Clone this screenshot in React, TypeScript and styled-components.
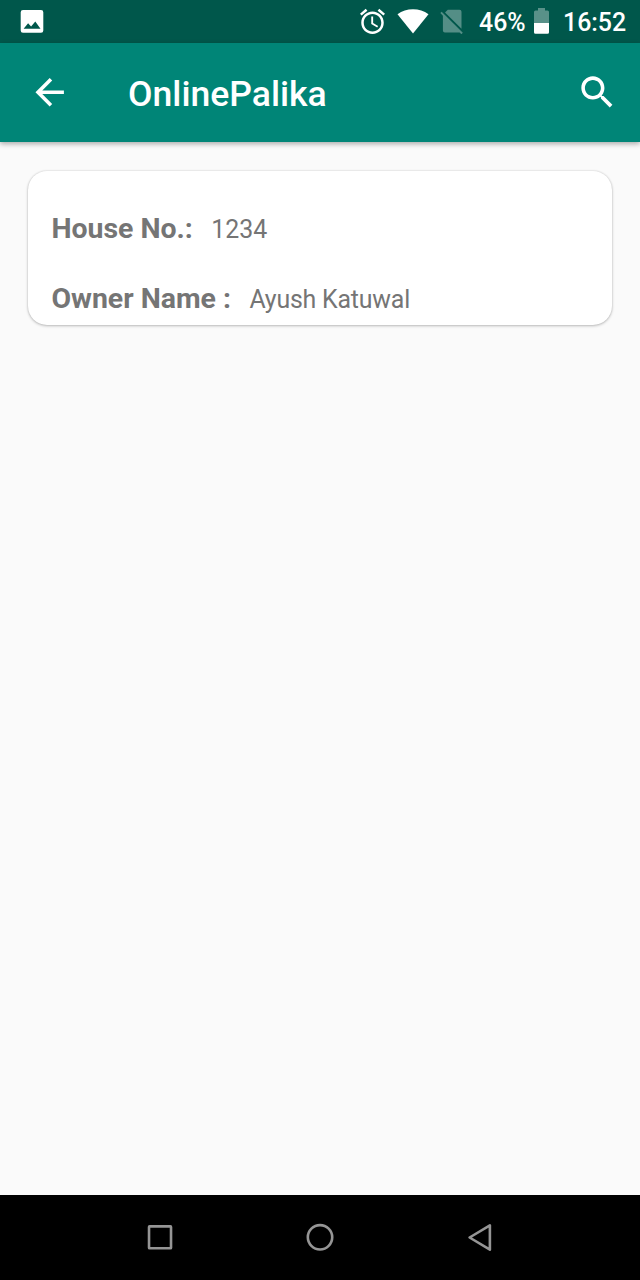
import React from "react";
import styled, { createGlobalStyle } from "styled-components";

const GlobalStyle = createGlobalStyle`
  * { box-sizing: border-box; }
  body { margin: 0; background: #fafafa; font-family: Roboto, "Liberation Sans", sans-serif; }
`;

const Screen = styled.div`
  display: flex;
  flex-direction: column;
  width: 640px;
  height: 1280px;
  overflow: hidden;
  background: #fafafa;
`;

const StatusBar = styled.header`
  flex: none;
  display: flex;
  align-items: center;
  height: 42.67px;
  padding: 0 14px 0 20px;
  background: #00574b;
  color: #fff;
`;

const Icon = styled.svg<{ $w: number; $h: number; $gap?: number }>`
  display: block;
  flex: none;
  width: ${(p) => p.$w}px;
  height: ${(p) => p.$h}px;
  margin-left: ${(p) => p.$gap ?? 0}px;
`;

const StatusGroup = styled.div`
  display: flex;
  align-items: center;
  margin-left: auto;
`;

const StatusText = styled.span<{ $gap: number; $width: number }>`
  width: ${(p) => p.$width}px;
  margin-left: ${(p) => p.$gap}px;
  padding-top: 4px;
  font-size: 24.9px;
  font-weight: 500;
  line-height: 30px;
  white-space: nowrap;
`;

const AppBar = styled.div`
  flex: none;
  display: flex;
  align-items: center;
  height: 99.55px;
  padding: 0 21px 0 28.4px;
  background: #008577;
  color: #fff;
  box-shadow: 0 2px 5px rgba(0, 0, 0, 0.32);
`;

const IconButton = styled.button`
  flex: none;
  padding: 0;
  border: 0;
  background: none;
  color: inherit;
`;

const Title = styled.h1`
  flex: 1;
  margin: 4px 0 0 57px;
  font-size: 35.56px;
  font-weight: 500;
  line-height: 42px;
`;

const Content = styled.main`
  flex: 1;
  padding: 28.5px 28.4px;
`;

const Card = styled.section`
  display: flex;
  flex-direction: column;
  gap: 36px;
  height: 154.5px;
  padding: 41px 23px 0;
  border-radius: 19px;
  background: #fff;
  box-shadow: 0 1px 3px rgba(0, 0, 0, 0.24), 0 0 2px rgba(0, 0, 0, 0.14);
`;

const Field = styled.div`
  display: flex;
  align-items: baseline;
  height: 34px;
  line-height: 34px;
  color: #757575;
  white-space: nowrap;
`;

const Label = styled.span`
  font-size: 28.44px;
  font-weight: 700;
`;

const Value = styled.span<{ $tracking: number }>`
  margin-left: 18.4px;
  font-size: 24.9px;
  letter-spacing: ${(p) => p.$tracking}px;
`;

const NavBar = styled.nav`
  flex: none;
  display: flex;
  align-items: center;
  justify-content: center;
  gap: 117.3px;
  height: 85.33px;
  background: #000;
`;

const fields = [
  { label: "House No.:", value: "1234", tracking: 0 },
  { label: "Owner Name :", value: "Ayush Katuwal", tracking: -0.2 },
];

export default function App() {
  return (
    <Screen>
      <GlobalStyle />
      <StatusBar>
        <Icon $w={24} $h={24} viewBox="0 0 24 24">
          <path
            fill="#fff"
            fillRule="evenodd"
            d="M3 .9h18a2.3 2.3 0 0 1 2.3 2.3V21.400a2.3 2.3 0 0 1-2.3 2.300H3A2.3 2.3 0 0 1 .7 21.400V3.200A2.300 2.300 0 0 1 3 .9zM3.600 19.700h16.900l-5.200-7.200-4.200 5.100-3-3.300z"
          />
        </Icon>
        <StatusGroup>
          <Icon $w={30} $h={30} viewBox="-.4 -.4 24 24">
            <path
              fill="#fff"
              d="M22 5.720l-4.600-3.860-1.290 1.530 4.600 3.860L22 5.720zM7.880 3.390L6.600 1.860 2 5.710l1.290 1.530 4.590-3.850zM12.500 8H11v6l4.750 2.850.75-1.230-4-2.370V8zM12 4c-4.970 0-9 4.030-9 9s4.020 9 9 9c4.970 0 9-4.030 9-9s-4.030-9-9-9zm0 16c-3.870 0-7-3.130-7-7s3.130-7 7-7 7 3.130 7 7-3.130 7-7 7z"
            />
          </Icon>
          <Icon $w={32} $h={25} $gap={10} viewBox="0 0 32 25">
            <path fill="#fff" d="M.5 5.200C5 1.800 10.200.2 16 .2s11 1.600 15.500 5L16 24.600z" />
          </Icon>
          <Icon $w={24} $h={25} $gap={11} viewBox="0 -.5 24 25">
            <g fill="#fff" fillOpacity=".33">
              <path d="M7.800.3h11.700A2 2 0 0 1 21.500 2.300V19.200L5 3.100z" />
              <path d="M1.700 2.200L.3 3.600l2.600 2.600V21a2 2 0 0 0 2 2h14.700l1.800 1.700 1.400-1.400z" />
            </g>
          </Icon>
          <StatusText $gap={15} $width={47}>46%</StatusText>
          <Icon $w={15} $h={26} $gap={8} viewBox="0 0 15 26">
            <path fill="#fff" fillOpacity=".35" d="M4 0h7v2.500h2.500A1.500 1.500 0 0 1 15 4v11H0V4a1.500 1.500 0 0 1 1.500-1.500H4z" />
            <path fill="#fff" d="M0 15h15v9.300a1.500 1.500 0 0 1-1.500 1.500h-12A1.500 1.500 0 0 1 0 24.300z" />
          </Icon>
          <StatusText $gap={14} $width={63}>16:52</StatusText>
        </StatusGroup>
      </StatusBar>
      <AppBar>
        <IconButton aria-label="Back">
          <Icon $w={42.67} $h={42.67} viewBox="0 0 24 24">
            <path fill="#fff" d="M20.200 11H8.030l5.590-5.590L12.200 4l-8 8 8 8 1.410-1.410L8.030 13H20.200v-2z" />
          </Icon>
        </IconButton>
        <Title>OnlinePalika</Title>
        <IconButton aria-label="Search">
          <Icon $w={42.67} $h={42.67} viewBox="0 0 24 24">
            <path
              fill="#fff"
              d="M15.500 14h-.79l-.28-.27C15.410 12.590 16 11.110 16 9.500 16 5.910 13.090 3 9.500 3S3 5.910 3 9.500 5.910 16 9.500 16c1.610 0 3.090-.59 4.230-1.570l.27.28v.79l5 4.990L20.490 19l-4.990-5zm-6 0C7.010 14 5 11.990 5 9.500S7.010 5 9.500 5 14 7.010 14 9.500 11.990 14 9.500 14z"
            />
          </Icon>
        </IconButton>
      </AppBar>
      <Content>
        <Card>
          {fields.map((f) => (
            <Field key={f.label}>
              <Label>{f.label}</Label>
              <Value $tracking={f.tracking}>{f.value}</Value>
            </Field>
          ))}
        </Card>
      </Content>
      <NavBar>
        <Icon $w={42.67} $h={42.67} viewBox="0.300 0 42.670 42.670">
          <rect x="10.330" y="10.330" width="22" height="22" rx=".6" fill="none" stroke="#959595" strokeWidth="2.600" />
        </Icon>
        <Icon $w={42.67} $h={42.67} viewBox="0.300 0 42.670 42.670">
          <circle cx="21.330" cy="21.330" r="12.200" fill="none" stroke="#959595" strokeWidth="2.600" />
        </Icon>
        <Icon $w={42.67} $h={42.67} viewBox="0.300 0 42.670 42.670">
          <path d="M31.200 9.300v24.400L10.900 21.500z" fill="none" stroke="#959595" strokeWidth="2.600" strokeLinejoin="round" />
        </Icon>
      </NavBar>
    </Screen>
  );
}
